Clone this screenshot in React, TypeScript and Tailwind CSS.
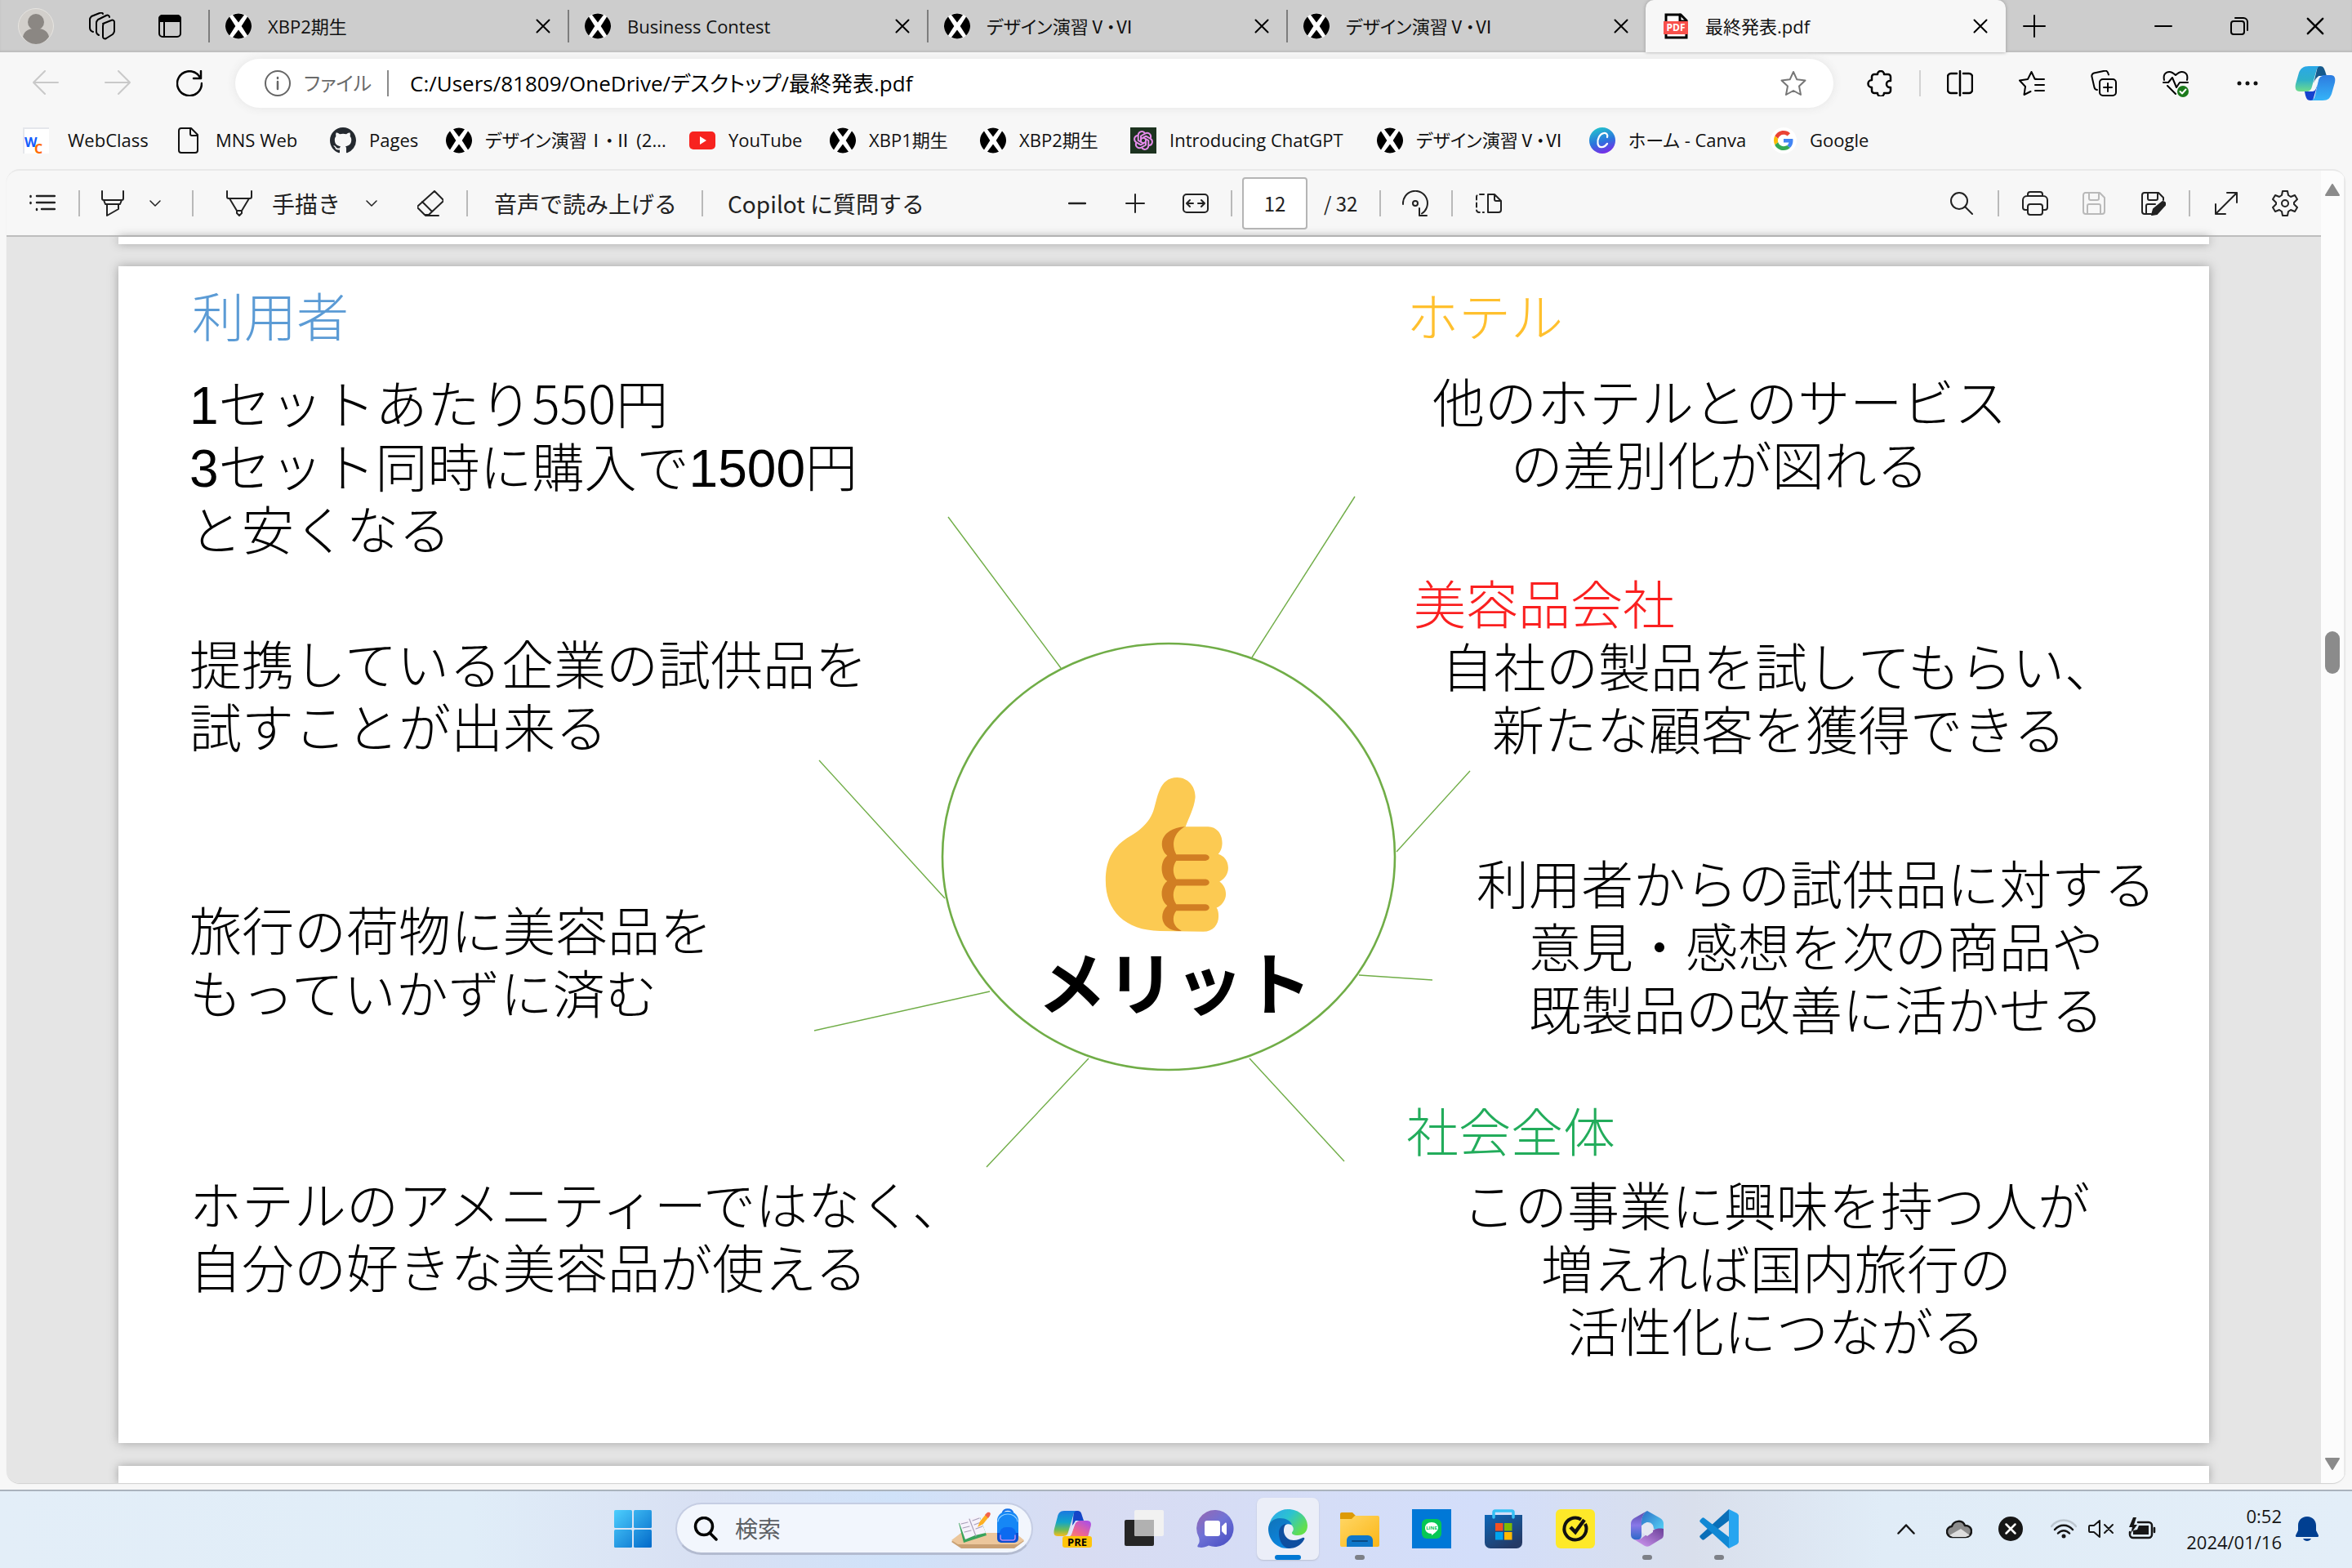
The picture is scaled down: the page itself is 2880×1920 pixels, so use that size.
import React from "react";

type IconProps = {
  w?: number;
  h?: number;
  vb?: string;
  sw?: number;
  className?: string;
  children: React.ReactNode;
};

function Icon({ w = 32, h = 32, vb, sw = 2, className = "", children }: IconProps) {
  return (
    <svg
      width={w}
      height={h}
      viewBox={vb ?? `0 0 ${w} ${h}`}
      fill="none"
      stroke="currentColor"
      strokeWidth={sw}
      strokeLinecap="round"
      strokeLinejoin="round"
      aria-hidden="true"
      className={`shrink-0 ${className}`}
    >
      {children}
    </svg>
  );
}

/* ---------- favicons ---------- */

function XFavicon() {
  return (
    <Icon sw={0}>
      <circle cx="16" cy="16" r="16" fill="#fff" />
      <path d="M9 2.2A16 16 0 0 1 23 2.2L16 11.5Z" fill="#000" />
      <path d="M9 29.8A16 16 0 0 0 23 29.8L16 20.5Z" fill="#000" />
      <path d="M5 4.5C-1.7 11-1.7 21 5 27.500L12.300 16Z" fill="#000" />
      <path d="M27 4.500C33.700 11 33.700 21 27 27.500L19.700 16Z" fill="#000" />
    </Icon>
  );
}

function WebClassIcon() {
  return (
    <span className="relative mr-[7px] block h-8 w-8 shrink-0 border-2 border-r-0 border-b-0 border-gray-200 bg-white leading-none font-bold">
      <span className="absolute top-1 left-0 text-base text-blue-600">W</span>
      <span className="absolute top-3 left-3 text-base text-orange-500">C</span>
    </span>
  );
}

function FileIcon() {
  return (
    <Icon>
      <path d="M7 1h11l8 8v19a3 3 0 0 1-3 3H6a3 3 0 0 1-3-3V4a3 3 0 0 1 3-3z" />
      <path d="M17 1v7a2 2 0 0 0 2 2h7" />
    </Icon>
  );
}

function GitHubIcon() {
  return (
    <Icon vb="0 0 16 16" sw={0}>
      <path
        fill="#24292f"
        d="M8 0C3.580 0 0 3.580 0 8c0 3.540 2.290 6.530 5.470 7.590.4.070.55-.17.55-.38 0-.19-.01-.82-.01-1.490-2.010.37-2.530-.49-2.690-.94-.09-.23-.48-.94-.82-1.130-.28-.15-.68-.52-.01-.53.63-.01 1.080.58 1.230.82.72 1.210 1.870.87 2.330.66.070-.52.28-.87.51-1.070-1.780-.2-3.640-.89-3.640-3.950 0-.87.31-1.590.82-2.150-.08-.2-.36-1.020.08-2.120 0 0 .67-.21 2.200.82.64-.18 1.320-.27 2-.27s1.360.09 2 .27c1.530-1.040 2.200-.82 2.200-.82.44 1.100.16 1.920.08 2.120.51.56.82 1.270.82 2.150 0 3.070-1.870 3.750-3.650 3.950.29.25.54.73.54 1.480 0 1.070-.01 1.930-.01 2.200 0 .21.15.46.55.38A8.010 8.010 0 0 0 16 8c0-4.420-3.580-8-8-8z"
      />
    </Icon>
  );
}

function YouTubeIcon() {
  return (
    <Icon sw={0}>
      <rect x="0" y="5" width="32" height="22" rx="5" fill="#f7231f" />
      <path d="M13 11l8 5-8 5z" fill="#fff" />
    </Icon>
  );
}

function GptIcon() {
  return (
    <Icon sw={0}>
      <rect width="32" height="32" fill="#1d3320" />
      <g stroke="#e58bea" strokeWidth="2" fill="none">
        {[0, 60, 120, 180, 240, 300].map((a) => (
          <path key={a} transform={`rotate(${a} 16 16)`} d="M13 17.500V10.500L18.500 7.300C22 5.500 26 8.500 25 12.500" />
        ))}
      </g>
    </Icon>
  );
}

function CanvaIcon() {
  return (
    <Icon sw={0}>
      <defs>
        <linearGradient id="canva" x1="0.3" y1="0" x2="0.6" y2="1">
          <stop offset="0" stopColor="#22c3cc" />
          <stop offset="0.55" stopColor="#2b74dd" />
          <stop offset="1" stopColor="#7a2be8" />
        </linearGradient>
      </defs>
      <circle cx="16" cy="16" r="16" fill="url(#canva)" />
      <path d="M22 12c1-3-1-5.500-4-5-5 .8-8.500 7-7.500 13 .8 5 7 6 11.500 0" stroke="#fff" strokeWidth="2.200" fill="none" />
    </Icon>
  );
}

function GoogleIcon() {
  return (
    <Icon vb="-8 -8 64 64" sw={0}>
      <circle cx="24" cy="24" r="32" fill="#fff" />
      <path fill="#EA4335" d="M24 9.500c3.540 0 6.710 1.220 9.210 3.600l6.850-6.850C35.900 2.380 30.470 0 24 0 14.620 0 6.510 5.380 2.560 13.220l7.980 6.190C12.430 13.720 17.740 9.500 24 9.500z" />
      <path fill="#4285F4" d="M46.980 24.550c0-1.570-.15-3.090-.38-4.550H24v9.020h12.940c-.58 2.960-2.260 5.480-4.780 7.180l7.730 6c4.510-4.180 7.090-10.360 7.090-17.650z" />
      <path fill="#FBBC05" d="M10.530 28.590c-.48-1.450-.76-2.990-.76-4.590s.27-3.140.76-4.590l-7.980-6.190C.92 16.460 0 20.120 0 24c0 3.880.92 7.540 2.560 10.780l7.970-6.190z" />
      <path fill="#34A853" d="M24 48c6.480 0 11.930-2.130 15.890-5.810l-7.730-6c-2.150 1.450-4.920 2.300-8.160 2.300-6.260 0-11.570-4.220-13.470-9.910l-7.980 6.190C6.510 42.620 14.620 48 24 48z" />
    </Icon>
  );
}

function PdfFavicon() {
  return (
    <span className="relative block h-8 w-8 shrink-0">
      <Icon sw={3}>
        <path d="M4 2h18l7 7v21H4z" fill="#fff" strokeLinejoin="miter" />
        <path d="M21 2v8h8" strokeLinejoin="miter" />
        <rect x="1" y="10" width="30" height="16" fill="#f8504b" stroke="none" />
      </Icon>
      <span className="absolute inset-x-0 top-[12px] text-center text-[12px] leading-[12px] font-bold text-white">PDF</span>
    </span>
  );
}

function Cross({ size = 18 }: { size?: number }) {
  return (
    <Icon w={size} h={size} vb="0 0 18 18">
      <path d="M1.500 1.500l15 15M16.500 1.500l-15 15" />
    </Icon>
  );
}

/* ---------- tab strip ---------- */

const backgroundTabs = ["XBP2期生", "Business Contest", "デザイン演習Ⅴ・Ⅵ", "デザイン演習Ⅴ・Ⅵ"];

function TabStrip() {
  return (
    <header className="flex h-16 items-center bg-[#cdcdcd] shadow-[inset_0_-2px_2px_#bdbdbd]">
      <button aria-label="プロフィール" className="ml-[22px] shrink-0">
        <Icon w={44} h={44} sw={0}>
          <circle cx="22" cy="22" r="21.500" fill="#d2cfcb" stroke="#e6e4e0" strokeWidth="1" />
          <circle cx="22" cy="17" r="10" fill="#8b8783" />
          <path d="M6 35c2-9 9-10 16-10s14 1 16 10c-4 6-10 9-16 9S10 41 6 35z" fill="#8b8783" />
        </Icon>
      </button>
      <button aria-label="ワークスペース" className="ml-[42px] shrink-0">
        <Icon w={34} h={34}>
          <path d="M18 14l10-4c2-1 4 0 4 2v11c0 2-1 3-2 4l-8 5c-2 1-4 0-4-2V17c0-1 0-2 1-3z" />
          <path d="M13 28c-2-1-3-2-3-4V13c0-2 1-3 2-4l10-5c2-1 4 0 4 2" />
          <path d="M6 24c-3-1-4-3-4-5V9c0-2 1-3 2-4l10-4c2-1 4 0 4 1" />
        </Icon>
      </button>
      <button aria-label="タブ操作メニュー" className="ml-[50px] shrink-0">
        <Icon w={32} h={32}>
          <rect x="3" y="3" width="26" height="26" rx="4" />
          <path d="M3 10V7a4 4 0 0 1 4-4h18a4 4 0 0 1 4 4v3z" fill="currentColor" />
          <path d="M9 10v19" />
        </Icon>
      </button>
      <nav className="ml-[31px] flex h-full items-center">
        {backgroundTabs.map((title, i) => (
          <div key={i} className="flex h-10 w-[440px] items-center border-l-2 border-[#7d7d7d] pr-[21px] pl-[19px]">
            <XFavicon />
            <a href="#tab" className="ml-5 flex-1 truncate text-[22px] text-[#111]">
              {title}
            </a>
            <button aria-label="タブを閉じる">
              <Cross />
            </button>
          </div>
        ))}
        <div className="flex h-full w-[441px] items-center rounded-t-[10px] bg-[#f7f7f7] pr-[22px] pl-[21px] shadow-[0_0_4px_#999]">
          <PdfFavicon />
          <a href="#tab" className="ml-5 flex-1 truncate text-[22px] text-[#111]">
            最終発表.pdf
          </a>
          <button aria-label="タブを閉じる">
            <Cross />
          </button>
        </div>
      </nav>
      <button aria-label="新しいタブ" className="ml-[21px] shrink-0">
        <Icon w={28} h={28}>
          <path d="M14 1v26M1 14h26" />
        </Icon>
      </button>
      <div className="mr-[34px] ml-auto flex items-center gap-[71px]">
        <button aria-label="最小化">
          <Icon w={22} h={22}>
            <path d="M1 11h20" />
          </Icon>
        </button>
        <button aria-label="元に戻す">
          <Icon w={22} h={22}>
            <rect x="1" y="5" width="16" height="16" rx="3" />
            <path d="M6 1h10a5 5 0 0 1 5 5v10" />
          </Icon>
        </button>
        <button aria-label="閉じる">
          <Cross size={22} />
        </button>
      </div>
    </header>
  );
}

/* ---------- address bar ---------- */

function CopilotIcon() {
  return (
    <Icon w={50} h={44} sw={0}>
      <defs>
        <linearGradient id="cpA" x1="0" y1="0" x2="0" y2="1">
          <stop offset="0" stopColor="#2aa7e8" />
          <stop offset="0.55" stopColor="#2fb1c8" />
          <stop offset="1" stopColor="#6fdc8c" />
        </linearGradient>
        <linearGradient id="cpB" x1="0" y1="0" x2="0" y2="1">
          <stop offset="0" stopColor="#2d7be0" />
          <stop offset="1" stopColor="#35b4f8" />
        </linearGradient>
      </defs>
      <path d="M28 1h3c4 0 5 3 6 6l2 6h-7c-5 0-7 4-9 9z" fill="#165a8c" />
      <path d="M22 43h-3c-4 0-5-3-6-6l-1-5h7c5 0 7-4 9-9z" fill="#1643cf" />
      <path d="M17 1h15c-4 0-5 3-6 7l-5 18c-1 4-3 6-7 6H6c-5 0-6-4-5-9l4-14c2-5 5-8 12-8z" fill="url(#cpA)" />
      <path d="M34 43H19c4 0 5-3 6-7l4-18c1-4 3-6 7-6h8c5 0 6 4 5 9l-4 14c-2 5-4 8-11 8z" fill="url(#cpB)" />
      <path d="M29 13h5c-4 1-5 4-6 8l-2 7c-1 3-3 4-5 4h-4c5 0 6-3 7-7z" fill="#eef6fc" />
    </Icon>
  );
}

function AddressRow() {
  return (
    <div className="flex h-[76px] items-center">
      <button aria-label="戻る" className="ml-10 text-[#c9c9c9]" disabled>
        <Icon>
          <path d="M31 15H1M15 1L1 15l14 14" />
        </Icon>
      </button>
      <button aria-label="進む" className="ml-14 text-[#c9c9c9]" disabled>
        <Icon>
          <path d="M1 15h30M17 1l14 14-14 14" />
        </Icon>
      </button>
      <button aria-label="更新" className="ml-14">
        <Icon sw={2.500}>
          <path d="M31 16A15 15 0 1 1 26 5l4 5M30 1v9h-9" />
        </Icon>
      </button>
      <div className="ml-10 flex h-[60px] flex-1 items-center rounded-full bg-white pr-[33px] pl-9 shadow-[0_0_12px_#e4e4e4]">
        <Icon className="text-[#666]">
          <circle cx="16" cy="16" r="15" />
          <path d="M16 14v9M16 9v1" strokeWidth="2.500" />
        </Icon>
        <span className="ml-4 w-[102px] shrink-0 text-[24px] text-[#6a6a6a]">ファイル</span>
        <span className="h-8 w-[2px] bg-[#8a8a8a]" />
        <input
          aria-label="アドレスと検索バー"
          defaultValue="C:/Users/81809/OneDrive/デスクトップ/最終発表.pdf"
          className="ml-[26px] min-w-0 flex-1 bg-transparent text-[26px] text-black outline-none"
        />
        <button aria-label="お気に入りに追加">
          <Icon className="text-[#767676]">
            <path d="M16 2l4.300 9.300L30.500 12.500 23 19.500l2 10.500L16 25l-9 5 2-10.500L1.500 12.500l10.200-1.200z" />
          </Icon>
        </button>
      </div>
      <button aria-label="拡張機能" className="ml-[41px]">
        <Icon sw={2.500}>
          <path d="M6 9V8a3 3 0 0 1 3-3h4a4 4 0 0 1 8 0h5a3 3 0 0 1 3 3v5h-1a4 4 0 0 0 0 8h1v4a3 3 0 0 1-3 3h-5a4 4 0 0 1-8 0H9a3 3 0 0 1-3-3v-4a4.500 4.500 0 0 1 0-9z" />
        </Icon>
      </button>
      <span className="ml-8 h-8 w-[2px] bg-[#d2d2d2]" />
      <div className="mr-4 ml-8 flex items-center gap-14">
        <button aria-label="画面を分割する">
          <Icon>
            <path d="M12 4H5a4 4 0 0 0-4 4v16a4 4 0 0 0 4 4h7M20 4h7a4 4 0 0 1 4 4v16a4 4 0 0 1-4 4h-7M16 1v30" strokeWidth="2.500" />
          </Icon>
        </button>
        <button aria-label="お気に入り">
          <Icon>
            <path d="M23 11l-3.500-.500L15.500 2l-4.500 9-10 1.500 7 7.500-1.500 10 8-4M20 11h11M20 18h11M20 25h11" />
          </Icon>
        </button>
        <button aria-label="コレクション">
          <Icon>
            <rect x="11" y="11" width="20" height="20" rx="4" />
            <path d="M21 16v10M16 21h10M8 24c-2 0-3-1-3.500-3L1.500 8C1 6 2 4 4 3.500l14-3c2 0 3 1 4 5" />
          </Icon>
        </button>
        <button aria-label="ブラウザーのエッセンシャル">
          <Icon h={34}>
            <path d="M2 13C0 4 8-1 16 7c8-8 16-3 14 6M1 16h6l5-6 5 12 4-6h10M6 20l10 10" />
            <circle cx="25" cy="27" r="7" fill="#1b7a1b" stroke="none" />
            <path d="M21.500 27l2.500 2.500 4.500-5" stroke="#fff" />
          </Icon>
        </button>
        <button aria-label="設定など">
          <Icon sw={0}>
            <g fill="#111">
              <circle cx="6" cy="16" r="2.500" />
              <circle cx="16" cy="16" r="2.500" />
              <circle cx="26" cy="16" r="2.500" />
            </g>
          </Icon>
        </button>
      </div>
      <button aria-label="Copilot" className="mr-5 ml-[26px]">
        <CopilotIcon />
      </button>
    </div>
  );
}

/* ---------- bookmarks ---------- */

const bookmarks = [
  { label: "WebClass", icon: <WebClassIcon />, width: "w-[188px]" },
  { label: "MNS Web", icon: <FileIcon />, width: "w-[188px]" },
  { label: "Pages", icon: <GitHubIcon />, width: "w-[142px]" },
  { label: "デザイン演習Ⅰ・Ⅱ (2...", icon: <XFavicon />, width: "w-[298px]" },
  { label: "YouTube", icon: <YouTubeIcon />, width: "w-[172px]" },
  { label: "XBP1期生", icon: <XFavicon />, width: "w-[184px]" },
  { label: "XBP2期生", icon: <XFavicon />, width: "w-[184px]" },
  { label: "Introducing ChatGPT", icon: <GptIcon />, width: "w-[302px]" },
  { label: "デザイン演習Ⅴ・Ⅵ", icon: <XFavicon />, width: "w-[260px]" },
  { label: "ホーム - Canva", icon: <CanvaIcon />, width: "w-[222px]" },
  { label: "Google", icon: <GoogleIcon />, width: "w-[160px]" },
];

function BookmarkBar() {
  return (
    <nav className="flex h-[67px] items-center pb-1 pl-7 text-[22px] text-[#111]">
      {bookmarks.map((b, i) => (
        <a key={i} href="#bookmark" className={`flex shrink-0 items-center gap-4 whitespace-nowrap ${b.width}`}>
          {b.icon}
          <span>{b.label}</span>
        </a>
      ))}
    </nav>
  );
}

/* ---------- PDF toolbar ---------- */

function Sep() {
  return <span className="h-8 w-[2px] shrink-0 bg-[#b9b9b9]" />;
}

function Chevron() {
  return (
    <Icon w={14} h={14} sw={1.500}>
      <path d="M1 4l6 6 6-6" />
    </Icon>
  );
}

function PdfToolbar() {
  return (
    <div className="flex h-[81px] items-center border-b-2 border-[#bdbdbd] bg-[#f7f7f7] text-[28px] text-[#222]">
      <div className="flex items-center">
        <button aria-label="目次" className="mr-7 ml-7">
          <Icon sw={2.500}>
            <path d="M9 7h22M9 15h22M15 23h16M1.500 7v1M1.500 15v1M9 23v1" />
          </Icon>
        </button>
        <Sep />
        <button aria-label="強調表示" className="ml-6">
          <Icon>
            <path d="M3 1v9a2 2 0 0 0 2 2h22a2 2 0 0 0 2-2V1M5 12l2 5h18l2-5M9 17v14l14-8v-6" />
          </Icon>
        </button>
        <button aria-label="強調表示の色" className="mr-[38px] ml-[29px]">
          <Chevron />
        </button>
        <Sep />
        <button className="ml-10 flex items-center gap-6">
          <Icon>
            <path d="M1 1v7a2 2 0 0 0 2 2h26a2 2 0 0 0 2-2V1M4 10l9 15h6l9-15M13 25v3l3 3 3-3v-3" />
          </Icon>
          <span className="w-[84px] whitespace-nowrap">手描き</span>
        </button>
        <button aria-label="手描きのプロパティ" className="ml-[31px]">
          <Chevron />
        </button>
        <button aria-label="消しゴム" className="mr-7 ml-[49px]">
          <Icon>
            <path d="M21 1l10 10c1 1 1 2 0 3L14 30h-5l-8-8c-1-1-1-2 0-3zM6 14l12 12M10 31h16" />
          </Icon>
        </button>
        <Sep />
        <button className="mr-[30px] ml-8 w-[224px] text-left whitespace-nowrap">音声で読み上げる</button>
        <Sep />
        <button className="ml-[30px] w-[240px] text-left whitespace-nowrap">Copilot に質問する</button>
      </div>
      <div className="ml-[177px] flex items-center">
        <button aria-label="縮小">
          <Icon w={22} h={22} sw={2.500}>
            <path d="M1 11h20" />
          </Icon>
        </button>
        <button aria-label="拡大" className="ml-12">
          <Icon w={24} h={24} sw={2}>
            <path d="M1 12h22M12 1v22" />
          </Icon>
        </button>
        <button aria-label="幅に合わせる" className="mr-[27px] ml-[46px]">
          <Icon>
            <rect x="1" y="5" width="30" height="22" rx="4" />
            <path d="M6 16h7M26 16h-7M9 12l-4 4 4 4M23 12l4 4-4 4" />
          </Icon>
        </button>
        <Sep />
        <input
          aria-label="ページ番号"
          defaultValue="12"
          className="ml-3 h-16 w-20 rounded-[4px] border-2 border-[#b5b5b5] bg-white text-center text-[24px]"
        />
        <span className="mr-[22px] ml-5 w-[46px] text-[24px] whitespace-nowrap">/ 32</span>
        <Sep />
        <button aria-label="回転" className="mr-7 ml-[26px]">
          <Icon>
            <path d="M1 17A15 15 0 1 1 24 28.500M21 22v9h9" />
            <circle cx="16" cy="16" r="3" />
          </Icon>
        </button>
        <Sep />
        <button aria-label="ページ ビュー" className="ml-7">
          <Icon>
            <path d="M15 5h8l8 8v11a3 3 0 0 1-3 3H15zM23 5v6a2 2 0 0 0 2 2h6" />
            <path d="M10 5H4a3 3 0 0 0-3 3v16a3 3 0 0 0 3 3h6" strokeDasharray="5 4" />
          </Icon>
        </button>
      </div>
      <div className="mr-7 ml-auto flex items-center">
        <button aria-label="検索" className="mr-[30px]">
          <Icon w={28} h={30}>
            <circle cx="11" cy="12" r="10" />
            <path d="M18 19l9 9" />
          </Icon>
        </button>
        <Sep />
        <button aria-label="印刷" className="ml-7">
          <Icon>
            <path d="M7 7V5a3 3 0 0 1 3-3h12a3 3 0 0 1 3 3v2M7 24H4a3 3 0 0 1-3-3v-9a5 5 0 0 1 5-5h20a5 5 0 0 1 5 5v9a3 3 0 0 1-3 3h-3" />
            <rect x="7" y="17" width="18" height="13" rx="3" />
          </Icon>
        </button>
        <button aria-label="保存" className="ml-10 text-[#b9b9b9]" disabled>
          <Icon>
            <path d="M5 3h18l6 6v17a3 3 0 0 1-3 3H6a3 3 0 0 1-3-3V6a3 3 0 0 1 2-3zM10 3v7a2 2 0 0 0 2 2h8a2 2 0 0 0 2-2V3M8 29V19a2 2 0 0 1 2-2h12a2 2 0 0 1 2 2v10" />
          </Icon>
        </button>
        <button aria-label="名前を付けて保存" className="mr-7 ml-10">
          <Icon>
            <path d="M14 29H6a3 3 0 0 1-3-3V6a3 3 0 0 1 3-3h17l6 6v3M10 3v7a2 2 0 0 0 2 2h8a2 2 0 0 0 2-2V3M8 29V19a2 2 0 0 1 2-2h9" />
            <path d="M15 30l2-7 11-9c3 0 4 2 3 4L21 29z" fill="currentColor" />
          </Icon>
        </button>
        <Sep />
        <button aria-label="全画面表示" className="ml-7">
          <Icon>
            <path d="M3 29L29 3M17 3h12v12M3 17v12h12" />
          </Icon>
        </button>
        <button aria-label="設定" className="ml-10">
          <Icon h={34}>
            <path d="M13 2h6l1 5 3 2 5-2 3 5-4 4v2l4 4-3 5-5-2-3 2-1 5h-6l-1-5-3-2-5 2-3-5 4-4v-2l-4-4 3-5 5 2 3-2z" />
            <circle cx="16" cy="17" r="4" />
          </Icon>
        </button>
      </div>
    </div>
  );
}

/* ---------- slide ---------- */

function Thumb() {
  return (
    <svg x="1206" y="623" width="157" height="194" viewBox="615 510 385 525" preserveAspectRatio="none">
      <path
        fill="#fcca52"
        d="M837 518C870 518 893 550 891 585C888 620 870 655 862 681H930C955 681 972 705 972 735C972 752 966 765 960 772C978 778 990 795 990 818C990 840 978 855 964 863C975 872 983 885 983 905C983 925 970 943 955 950C960 958 961 968 961 978C961 1005 945 1029 915 1029L785 1027C680 1025 622 960 622 860C622 790 645 745 695 713C735 688 755 660 765 630C778 590 780 518 837 518Z"
      />
      <path
        fill="#d17e23"
        d="M860 681C822 683 791 705 791 738C791 755 797 768 807 777C785 795 785 845 807 862C785 880 785 925 807 943C785 965 787 1005 815 1020C825 1026 840 1028 850 1026C822 1012 820 980 834 960H922C937 958 937 940 922 938H834C822 918 823 896 834 877H922C937 875 937 857 922 855H834C822 835 823 813 834 794H922C937 792 937 775 922 773H834C820 745 822 705 860 681Z"
      />
    </svg>
  );
}

const spokes = [
  [1016, 307, 1154, 492],
  [1514, 282, 1388, 479],
  [858, 605, 1012, 774],
  [1655, 618, 1565, 717],
  [852, 936, 1067, 888],
  [1519, 868, 1609, 874],
  [1063, 1103, 1188, 970],
  [1385, 970, 1501, 1096],
];

function Digits({ children }: { children: React.ReactNode }) {
  return <span className="font-[Liberation_Sans] leading-none font-normal">{children}</span>;
}

function Slide() {
  return (
    <article className="relative flex flex-1 bg-white text-[64px] leading-[77px] font-light text-black shadow-[0_0_12px_#a0a0a0]">
      <svg className="absolute inset-0 h-full w-full" viewBox="0 0 2560 1441" aria-hidden="true">
        <g stroke="#70ad47" fill="none">
          <ellipse cx="1286" cy="723" rx="277" ry="261" strokeWidth="2.600" />
          {spokes.map(([x1, y1, x2, y2], i) => (
            <line key={i} x1={x1} y1={y1} x2={x2} y2={y2} strokeWidth="1.400" />
          ))}
        </g>
        <Thumb />
      </svg>
      <section className="relative w-[1010px] pt-5 pl-[87px] whitespace-nowrap">
        <h2 className="ml-[3px] text-[#5b9bd5]">利用者</h2>
        <p className="mt-[30px]">
          <Digits>1</Digits>セットあたり550円
          <br />
          <Digits>3</Digits>セット同時に購入で
          <Digits>1500</Digits>円
          <br />
          と安くなる
        </p>
        <p className="mt-[88px]">
          提携している企業の試供品を
          <br />
          試すことが出来る
        </p>
        <p className="mt-[172px]">
          旅行の荷物に美容品を
          <br />
          もっていかずに済む
        </p>
        <p className="mt-[182px]">
          ホテルのアメニティーではなく、
          <br />
          自分の好きな美容品が使える
        </p>
      </section>
      <h1 className="relative mt-[824px] w-[567px] text-center text-[84px] leading-[100px] font-bold whitespace-nowrap">メリット</h1>
      <section className="relative flex-1 pt-5 whitespace-nowrap">
        <h2 className="text-[#ffc02e]">ホテル</h2>
        <p className="mt-[28px] ml-8 w-fit text-center">
          他のホテルとのサービス
          <br />
          の差別化が図れる
        </p>
        <h2 className="mt-[93px] ml-[9px] text-[#fa2020]">美容品会社</h2>
        <p className="ml-[43px] w-fit text-center">
          自社の製品を試してもらい、
          <br />
          新たな顧客を獲得できる
        </p>
        <p className="mt-[112px] ml-[86px] w-fit text-center">
          利用者からの試供品に対する
          <br />
          意見・感想を次の商品や
          <br />
          既製品の改善に活かせる
        </p>
        <h2 className="mt-[72px] text-[#22ac5b]">社会全体</h2>
        <p className="mt-[14px] ml-[69px] w-fit text-center">
          この事業に興味を持つ人が
          <br />
          増えれば国内旅行の
          <br />
          活性化につながる
        </p>
      </section>
    </article>
  );
}

function Viewer() {
  return (
    <div className="mx-2 flex flex-1 overflow-hidden rounded-[16px] border-t-2 border-[#e9e9e9] bg-[#fcfcfc] shadow-[0_1px_1px_#d0d0d0]">
      <main className="flex flex-1 flex-col bg-[#e5e5e5]">
        <PdfToolbar />
        <div className="mx-[137px] flex flex-1 flex-col">
          <div className="h-[9px] bg-white shadow-[0_0_12px_#a0a0a0]" />
          <div className="flex flex-1 flex-col pt-[27px] pb-7">
            <Slide />
          </div>
          <div className="h-[21px] bg-white shadow-[0_0_12px_#a0a0a0]" />
        </div>
      </main>
      <aside aria-label="スクロールバー" className="flex w-[30px] flex-col items-center border-r-2 border-[#e9e9e9] py-4">
        <Icon w={20} h={16} sw={0}>
          <path d="M10 1l8 13H2z" fill="#8b8b8b" stroke="#8b8b8b" strokeWidth="2" />
        </Icon>
        <span className="mt-[532px] h-[52px] w-[18px] rounded-full bg-[#8b8b8b]" />
        <Icon w={20} h={16} sw={0} className="mt-auto">
          <path d="M10 15l8-13H2z" fill="#8b8b8b" stroke="#8b8b8b" strokeWidth="2" />
        </Icon>
      </aside>
    </div>
  );
}

/* ---------- taskbar ---------- */

function SearchArt() {
  return (
    <Icon w={92} h={50} sw={0}>
      <path d="M2 41l12-11h66l11 10-12 9H14z" fill="#c9a073" />
      <path d="M2 39l12-9h66l11 9-8 5H10z" fill="#ecc79c" />
      <path d="M11 18l26-7 8 22-28 9z" fill="#39a35a" />
      <path d="M11 16l13-3 12-4 8 21-13 3-12 5z" fill="#f6f2fb" />
      <path d="M24 13l8 21M14 19l8-2M16 24l8-2M18 29l8-2M28 15l8-3M30 20l8-3M32 25l8-3" stroke="#a89fb8" strokeWidth="1.200" />
      <path d="M34 23l3-7 8-10 4 3-8 10z" fill="#fdb022" />
      <path d="M43 8l3-3c3-1 5 1 3 4l-2 3z" fill="#f2634d" />
      <path d="M65 6c0-6 12-6 12 0" stroke="#1672e8" strokeWidth="2.500" />
      <rect x="58" y="4" width="26" height="38" rx="11" fill="#1687f5" />
      <path d="M58 30h26v7a5 5 0 0 1-5 5H63a5 5 0 0 1-5-5z" fill="#0b4fd0" />
      <rect x="61" y="23" width="20" height="16" rx="8" fill="#0c6af0" />
      <path d="M62 33v3a3 3 0 0 0 3 3h12a3 3 0 0 0 3-3v-3" stroke="#b68cf5" strokeWidth="1.500" />
      <path d="M59 16c2-12 22-12 24 0" stroke="#8fd0ff" strokeWidth="1.200" />
    </Icon>
  );
}

function StartIcon() {
  return (
    <Icon w={48} h={48} sw={0}>
      <defs>
        <linearGradient id="win" gradientUnits="userSpaceOnUse" x1="0" y1="0" x2="48" y2="48">
          <stop offset="0" stopColor="#4fd1ff" />
          <stop offset="1" stopColor="#0067c8" />
        </linearGradient>
      </defs>
      <g fill="url(#win)">
        <rect x="1" y="1" width="22" height="22" rx="1.500" />
        <rect x="25" y="1" width="22" height="22" rx="1.500" />
        <rect x="1" y="25" width="22" height="22" rx="1.500" />
        <rect x="25" y="25" width="22" height="22" rx="1.500" />
      </g>
    </Icon>
  );
}

function CopilotPre() {
  return (
    <span className="relative block h-12 w-12">
      <Icon w={48} h={48} sw={0}>
        <defs>
          <linearGradient id="preA" x1="0" y1="0" x2="0" y2="1">
            <stop offset="0" stopColor="#1b78e0" />
            <stop offset="0.45" stopColor="#12a5c9" />
            <stop offset="0.75" stopColor="#6dbb57" />
            <stop offset="1" stopColor="#fbbc1d" />
          </linearGradient>
          <linearGradient id="preB" x1="1" y1="0" x2="0" y2="1">
            <stop offset="0" stopColor="#a44cf0" />
            <stop offset="0.6" stopColor="#f0688c" />
            <stop offset="1" stopColor="#fb9a5a" />
          </linearGradient>
        </defs>
        <path d="M26 2h4c4 0 5 2 6 6l2 6h-8l-6 6z" fill="#1546c8" />
        <path d="M14 2h16c-3 0-4 2-5 6l-6 20c-1 4-3 5-7 5H6c-5 0-5-4-4-9l4-15c1-4 3-7 8-7z" fill="url(#preA)" />
        <path d="M34 14h8c5 0 6 4 4 9l-3 11H12c6 0 10-1 12-7l3-8c1-3 3-5 7-5z" fill="url(#preB)" />
        <path d="M28 14h6c-4 0-6 2-7 5l-4 12c-1 2-3 3-5 3h-4c4-1 5-3 6-7z" fill="#dfe6fb" />
        <rect x="12" y="33" width="36" height="14" rx="3" fill="#ffc50a" />
      </Icon>
      <span className="absolute right-0 bottom-[2px] w-9 text-center text-[13px] leading-[12px] font-bold text-black">PRE</span>
    </span>
  );
}

function TaskViewIcon() {
  return (
    <Icon w={48} h={48} sw={0}>
      <rect x="0" y="13" width="36" height="32" rx="2" fill="#262626" />
      <rect x="12" y="1" width="36" height="32" rx="2" fill="#f1f1f1" />
      <path d="M12 13h24v20H14a2 2 0 0 1-2-2z" fill="#b1b1b1" />
    </Icon>
  );
}

function ChatIcon() {
  return (
    <Icon w={48} h={48} sw={0}>
      <defs>
        <linearGradient id="chat" x1="0" y1="0" x2="0.800" y2="1">
          <stop offset="0" stopColor="#9a68b0" />
          <stop offset="0.5" stopColor="#6f72d6" />
          <stop offset="1" stopColor="#4a50c4" />
        </linearGradient>
      </defs>
      <path d="M24 1a22.500 22.500 0 1 1-9 43.500c-4 2-9 3-12 2-2 0-2-1-1-3 2-3 2-5 1-9A22.500 22.500 0 0 1 24 1z" fill="url(#chat)" />
      <rect x="10" y="14" width="19" height="19" rx="3" fill="#fff" />
      <path d="M31 21l4-4c1-1 2 0 2 1v12c0 1-1 2-2 1l-4-4z" fill="#fff" />
    </Icon>
  );
}

function EdgeIcon() {
  return (
    <Icon w={48} h={48} sw={0}>
      <defs>
        <linearGradient id="edA" x1="0" y1="0" x2="1" y2="0.600">
          <stop offset="0" stopColor="#2da4f0" />
          <stop offset="0.5" stopColor="#2cc3d0" />
          <stop offset="1" stopColor="#63df4c" />
        </linearGradient>
        <linearGradient id="edB" x1="0" y1="0" x2="0.500" y2="1">
          <stop offset="0" stopColor="#1173b8" />
          <stop offset="1" stopColor="#0a86e0" />
        </linearGradient>
      </defs>
      <path d="M1 20C3 8 13 0 24 0c14 0 24 10 24 20 0 8-5 12-12 12-5 0-9-2-6-5 2-3 0-9-6-9C14 12 4 14 1 20z" fill="url(#edA)" />
      <path d="M0 24c0-8 7-13 14-13 8 0 13 3 15 8-5-2-11 0-13 6-4 10 4 20 13 22-2 1-4 1-6 1C10 48 0 37 0 24z" fill="url(#edB)" />
      <path d="M13 29c0-6 4-11 9-11-6 6-3 20 9 20 5 0 8-2 11-3 2-1 3 1 2 2-4 8-12 11-19 11-7-1-12-9-12-19z" fill="#0f4fa0" />
    </Icon>
  );
}

function FolderIcon() {
  return (
    <Icon w={48} h={48} sw={0}>
      <defs>
        <linearGradient id="fold" x1="0" y1="0" x2="1" y2="1">
          <stop offset="0" stopColor="#ffd766" />
          <stop offset="1" stopColor="#fbb616" />
        </linearGradient>
      </defs>
      <path d="M0 6a2 2 0 0 1 2-2h13l5 5h10v8H0z" fill="#dd9a05" />
      <path d="M0 12h14l4-4h28a2 2 0 0 1 2 2v34a2 2 0 0 1-2 2H2a2 2 0 0 1-2-2z" fill="url(#fold)" />
      <path d="M8 46V38a6 6 0 0 1 6-6h20a6 6 0 0 1 6 6v8z" fill="#0f77c9" />
      <path d="M15 39h18" stroke="#0a4b86" strokeWidth="2" />
    </Icon>
  );
}

function LineIcon() {
  return (
    <span className="relative block h-12 w-12">
      <Icon w={48} h={48} sw={0}>
        <rect width="48" height="48" fill="#0078d7" />
        <rect x="12" y="12" width="24" height="24" rx="6" fill="#06c755" />
        <path d="M24 16c5 0 8 3 8 7 0 3-4 6-8 9v-2c-5 0-8-3-8-7s3-7 8-7z" fill="#fff" />
      </Icon>
      <span className="absolute inset-x-0 top-5 text-center text-[6px] leading-[6px] font-bold text-[#06c755]">LINE</span>
    </span>
  );
}

function StoreIcon() {
  return (
    <Icon w={48} h={48} sw={0}>
      <defs>
        <linearGradient id="store" x1="0" y1="0" x2="0.600" y2="1">
          <stop offset="0" stopColor="#0d67b8" />
          <stop offset="1" stopColor="#243a66" />
        </linearGradient>
      </defs>
      <path d="M1 7h46v34a7 7 0 0 1-7 7H8a7 7 0 0 1-7-7z" fill="url(#store)" />
      <path d="M12 10V4a2 2 0 0 1 2-2h20a2 2 0 0 1 2 2v6" stroke="#35c1f5" strokeWidth="3.500" />
      <rect x="14" y="17" width="9.500" height="9.500" fill="#f25022" />
      <rect x="25" y="17" width="9.500" height="9.500" fill="#7fba00" />
      <rect x="14" y="28" width="9.500" height="9.500" fill="#00a4ef" />
      <rect x="25" y="28" width="9.500" height="9.500" fill="#ffb900" />
    </Icon>
  );
}

function NortonIcon() {
  return (
    <Icon w={48} h={48} sw={0}>
      <rect width="48" height="48" rx="6" fill="#fee929" />
      <path d="M31 12.500A13.500 13.500 0 1 0 36 18" stroke="#111" strokeWidth="4" strokeLinecap="butt" fill="none" />
      <path d="M18 22l6 6 11-15" stroke="#111" strokeWidth="4.500" strokeLinecap="butt" strokeLinejoin="miter" fill="none" />
    </Icon>
  );
}

function M365Icon() {
  return (
    <Icon w={48} h={48} sw={0}>
      <defs>
        <linearGradient id="mA" x1="0" y1="0" x2="0" y2="1">
          <stop offset="0" stopColor="#5a48a8" />
          <stop offset="0.5" stopColor="#8878e8" />
          <stop offset="1" stopColor="#2a68c8" />
        </linearGradient>
        <linearGradient id="mB" x1="0" y1="0" x2="1" y2="1">
          <stop offset="0" stopColor="#2a6bc4" />
          <stop offset="1" stopColor="#5adcfb" />
        </linearGradient>
        <linearGradient id="mC" x1="0" y1="1" x2="1" y2="0">
          <stop offset="0" stopColor="#d49cf5" />
          <stop offset="1" stopColor="#6a3f98" />
        </linearGradient>
      </defs>
      <path d="M24 2L8 11c-3 2-4 4-4 7v13c0 3 1 5 4 6 6 2 9-1 9-5V20c0-5 0-14 7-18z" fill="url(#mA)" />
      <path d="M24 2l16 9c3 2 4 4 4 7v12l-12-6c0-5-3-8-7-8-3 0-8 2-8 8 0-8-1-17 7-22z" fill="url(#mB)" />
      <path d="M44 24v7c0 3-1 5-4 6l-13 8c-2 1-4 1-6 0L8 37c6 1 9-1 11-3l12-8c6-4 13-2 13-2z" fill="url(#mC)" />
      <path d="M24 16l7 4v8l-7 5-7-5v-8z" fill="#e4e7f2" />
    </Icon>
  );
}

function VSCodeIcon() {
  return (
    <Icon w={48} h={48} sw={0}>
      <path d="M36 14L6 37c-1 1-2 1-3 0l-2-2c-1-1-1-2 0-3L36 0z" fill="#0a6fb8" />
      <path d="M36 34L6 11c-1-1-2-1-3 0l-2 2c-1 1-1 2 0 3l35 32z" fill="#1088d4" />
      <path d="M36 0l10 5c1 1 2 2 2 3v32c0 1-1 2-2 3l-10 5z" fill="#27a5f0" />
    </Icon>
  );
}

const apps = [
  { name: "Copilot", icon: <CopilotPre />, state: "none" },
  { name: "タスク ビュー", icon: <TaskViewIcon />, state: "none" },
  { name: "チャット", icon: <ChatIcon />, state: "none" },
  { name: "Microsoft Edge", icon: <EdgeIcon />, state: "active" },
  { name: "エクスプローラー", icon: <FolderIcon />, state: "open" },
  { name: "LINE", icon: <LineIcon />, state: "none" },
  { name: "Microsoft Store", icon: <StoreIcon />, state: "none" },
  { name: "Norton", icon: <NortonIcon />, state: "none" },
  { name: "Microsoft 365", icon: <M365Icon />, state: "open" },
  { name: "Visual Studio Code", icon: <VSCodeIcon />, state: "open" },
];

function Taskbar() {
  return (
    <footer className="flex h-24 items-center border-t-2 border-[#aab3bd] bg-[linear-gradient(90deg,#e3eef8_0%,#e0edf8_20%,#d8e0f3_30%,#d0e2f9_38%,#d8dcf2_46%,#d3defa_63%,#d9dfec_72%,#e0ecf7_80%,#e3eef8_100%)] pb-[2px]">
      <button aria-label="スタート" className="ml-[751px]">
        <StartIcon />
      </button>
      <label className="ml-7 flex h-16 w-[438px] shrink-0 items-center rounded-full border-2 border-b-[3px] border-[#c5cde3] border-b-[#b3bbd0] bg-[#f2f6fd] pr-2 pl-5">
        <Icon w={30} h={30} sw={3.500}>
          <circle cx="13" cy="12" r="10.500" />
          <path d="M20 20l8 8" />
        </Icon>
        <input
          aria-label="検索"
          placeholder="検索"
          className="ml-[21px] w-[200px] flex-1 bg-transparent text-[28px] outline-none placeholder:text-[#5c5f64]"
        />
        <SearchArt />
      </label>
      <div className="ml-1 flex items-center">
        {apps.map((app) => (
          <div key={app.name} className="flex w-22 justify-center">
            <button
              aria-label={app.name}
              className={
                app.state === "active"
                  ? "relative flex h-[76px] w-[76px] items-center justify-center rounded-lg bg-[#ebeef8] shadow-[0_1px_2px_#b9bfd0]"
                  : "relative flex h-[76px] w-[76px] items-center justify-center"
              }
            >
              {app.icon}
              {app.state === "active" && <span className="absolute bottom-0 h-[6px] w-8 rounded-full bg-[#0078d4]" />}
              {app.state === "open" && <span className="absolute bottom-0 h-[6px] w-3 rounded-full bg-[#7d8087]" />}
            </button>
          </div>
        ))}
      </div>
      <div className="mr-10 ml-auto flex items-center text-[#161616]">
        <button aria-label="隠れているインジケーター" className="mr-[38px]">
          <Icon w={22} h={14} sw={2.500}>
            <path d="M1.500 12.500l9.500-10 9.500 10" />
          </Icon>
        </button>
        <Icon h={24} sw={2.500} className="mr-8">
          <path d="M8 22a6.500 6.500 0 0 1-1-13C9 2 20 0 23 8c5 0 8 3 8 7s-3 7-7 7z" fill="#8d8d8d" />
          <path d="M4 20l14-8 11 8-5 2H8z" fill="#dedede" stroke="none" />
        </Icon>
        <Icon w={30} h={30} sw={0} className="mr-[34px]">
          <circle cx="15" cy="15" r="15" fill="#161616" />
          <path d="M9.500 9.500l11 11M20.500 9.500l-11 11" stroke="#fff" strokeWidth="2.500" />
        </Icon>
        <Icon h={24} sw={2.500} className="mr-[14px]">
          <path d="M1 9C9-1 23-1 31 9" stroke="#bcc6cf" />
          <path d="M5 13c6-7 16-7 22 0M9 17.500c4-4.500 10-4.500 14 0" />
          <circle cx="16" cy="21" r="2.500" fill="currentColor" stroke="none" />
        </Icon>
        <Icon h={24} sw={2} className="mr-[17px]">
          <path d="M2 8h5l7-6v20l-7-6H2c-1 0-1-1-1-2v-4c0-1 0-2 1-2zM20 7l10 10M30 7L20 17" />
        </Icon>
        <Icon w={34} h={28} sw={2.500} className="mr-[34px]">
          <path d="M12 6h13a4 4 0 0 1 4 4v11a4 4 0 0 1-4 4H6a4 4 0 0 1-4-4v-3M32 13v5" />
          <path d="M13 10h12v11H6v-5l5-1z" fill="currentColor" stroke="none" />
          <path d="M6 0L1 12h4l-2 8 8-11H7l3-9z" fill="currentColor" stroke="none" />
        </Icon>
        <time className="w-[120px] text-right text-[22px] leading-8 whitespace-nowrap">
          0:52
          <br />
          2024/01/16
        </time>
        <button aria-label="通知" className="ml-4">
          <Icon w={30} h={32} sw={0}>
            <path d="M15 1c-7 0-11 5-11 11v6l-3 6c0 1 0 2 1 2h26c1 0 1-1 1-2l-3-6v-6C26 6 22 1 15 1zM10 28h10c-1 2-3 3-5 3s-4-1-5-3z" fill="#003f91" />
          </Icon>
        </button>
      </div>
    </footer>
  );
}

export default function App() {
  return (
    <div
      lang="ja"
      className="flex min-h-screen flex-col bg-[#f7f7f7] font-['Open_Sans','Noto_Sans_CJK_JP',sans-serif] text-black"
    >
      <div className="[font-feature-settings:'palt']">
        <TabStrip />
        <AddressRow />
        <BookmarkBar />
      </div>
      <div className="flex flex-1 flex-col pb-2 font-['Noto_Sans_CJK_JP',sans-serif]">
        <Viewer />
      </div>
      <Taskbar />
    </div>
  );
}
